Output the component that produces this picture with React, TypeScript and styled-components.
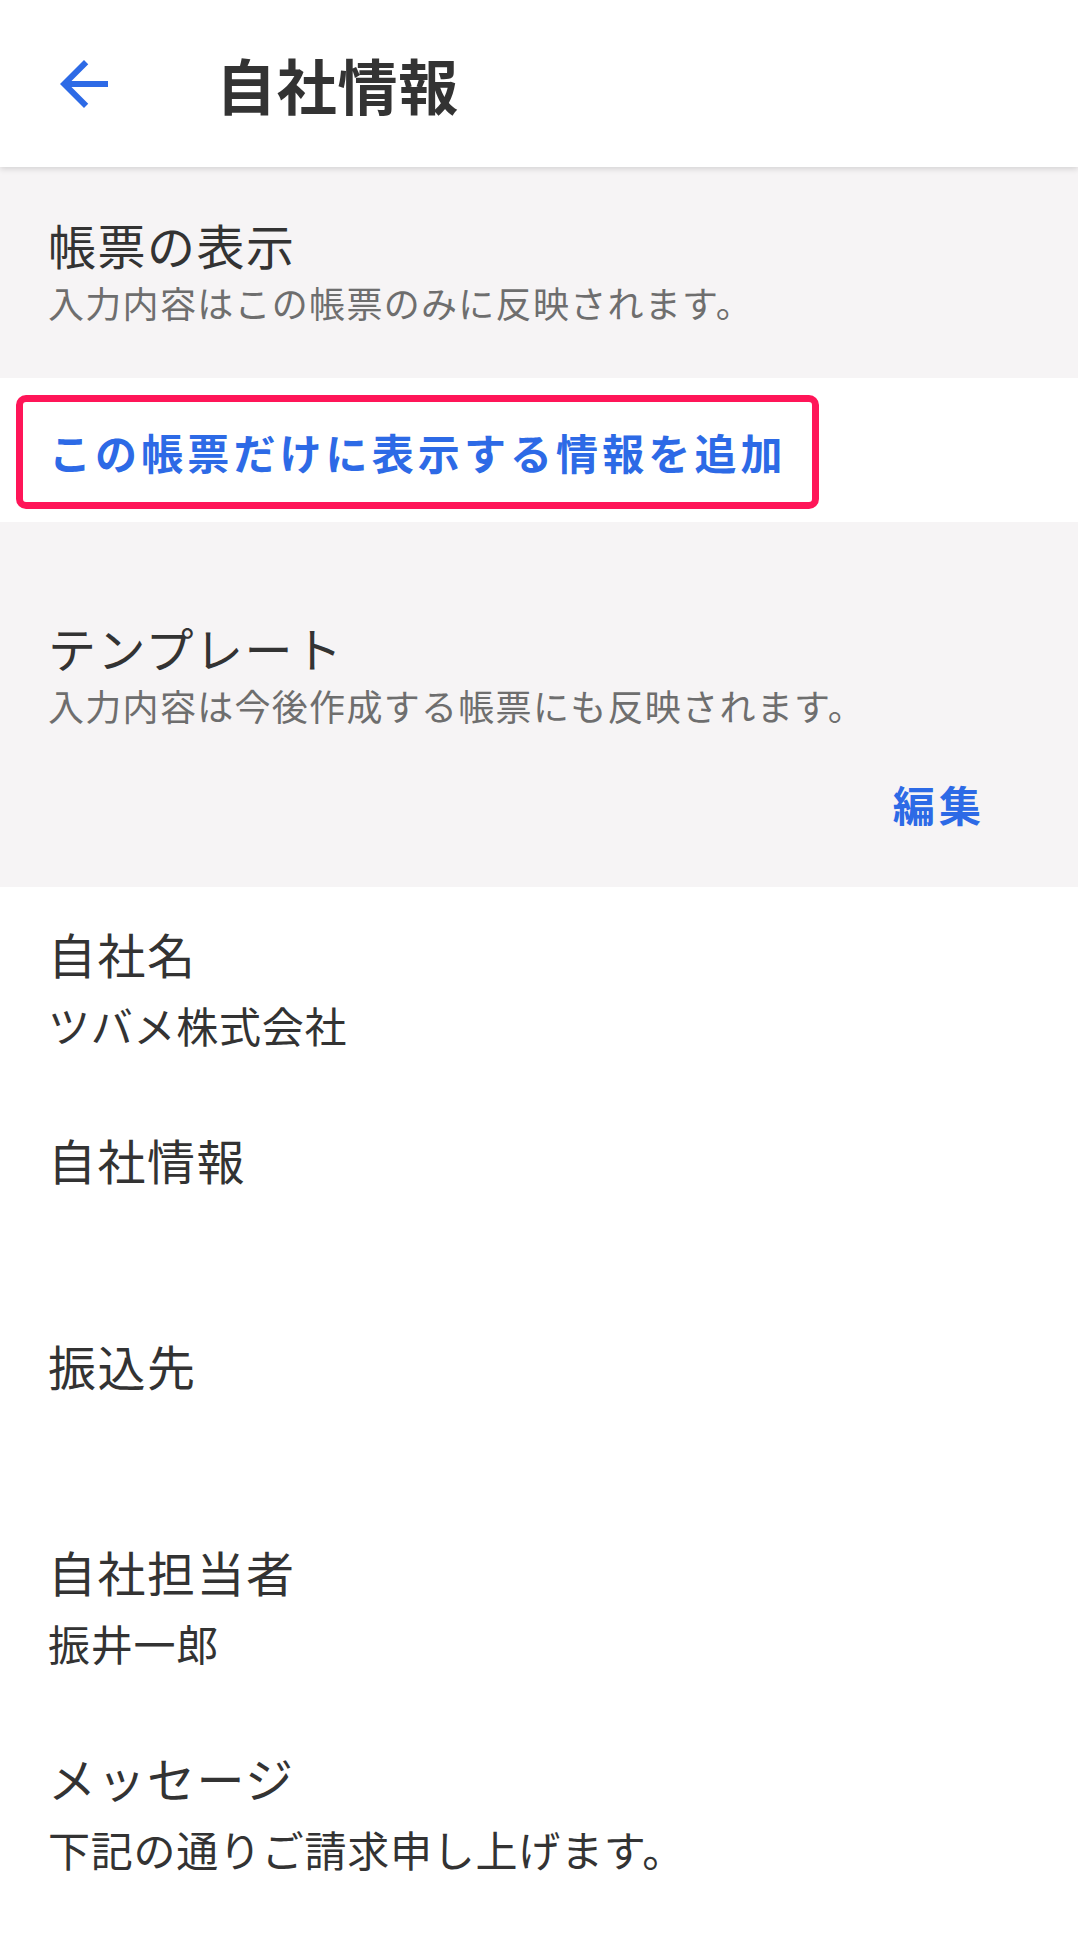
import React from "react";
import styled, { createGlobalStyle } from "styled-components";

const GlobalStyle = createGlobalStyle`
  html, body {
    margin: 0;
    padding: 0;
    background: #ffffff;
  }
  body {
    font-family: "Noto Sans CJK JP", "Noto Sans", Roboto, sans-serif;
    color: #333333;
    -webkit-font-smoothing: antialiased;
  }
  * {
    box-sizing: border-box;
  }
`;

const BLUE = "#2d6ae6";
const PINK = "#ff1558";
const PANEL = "#f6f4f5";

const Page = styled.div`
  width: 1078px;
  min-height: 1940px;
  background: #ffffff;
  display: flex;
  flex-direction: column;
`;

const AppBar = styled.header`
  position: relative;
  z-index: 1;
  height: 167px;
  display: flex;
  align-items: center;
  padding-left: 48px;
  background: #ffffff;
  box-shadow: 0 2px 6px rgba(0, 0, 0, 0.14);
`;

const BackButton = styled.button`
  width: 72px;
  height: 72px;
  padding: 0;
  border: none;
  background: transparent;
  display: flex;
  align-items: center;
  justify-content: center;
  color: ${BLUE};
  cursor: pointer;
`;

const Title = styled.h1`
  margin: 0 0 0 96px;
  font-size: 60px;
  line-height: 72px;
  font-weight: 700;
  letter-spacing: 0.75px;
  color: #333333;
`;

const Panel = styled.section<{ $top: number; $bottom: number }>`
  background: ${PANEL};
  display: flex;
  flex-direction: column;
  padding: ${(p) => p.$top}px 0 ${(p) => p.$bottom}px 48px;
`;

const PanelHeading = styled.div`
  font-size: 48px;
  line-height: 60px;
  letter-spacing: 1.5px;
  color: #333333;
`;

const PanelNote = styled.div`
  margin-top: 6px;
  font-size: 36px;
  line-height: 44px;
  letter-spacing: 1.3px;
  color: #6e6e6e;
`;

const EditRow = styled.div`
  display: flex;
  justify-content: flex-end;
  margin-top: 51px;
  padding-right: 93px;
`;

const TextButton = styled.button`
  padding: 0;
  border: none;
  background: transparent;
  font-family: inherit;
  font-size: 42px;
  line-height: 52px;
  font-weight: 700;
  letter-spacing: 4.1px;
  color: ${BLUE};
  cursor: pointer;
`;

const ButtonArea = styled.div`
  background: #ffffff;
  display: flex;
  padding: 17px 0 13px 16px;
`;

const Highlight = styled.div`
  height: 114px;
  display: inline-flex;
  align-items: center;
  padding: 0 25px 0 26px;
  border: 7px solid ${PINK};
  border-radius: 10px;
`;

const FieldList = styled.div`
  display: flex;
  flex-direction: column;
`;

const Field = styled.div`
  display: flex;
  flex-direction: column;
  gap: 16px;
  padding: 36px 48px 42px;
`;

const FieldLabel = styled.div`
  font-size: 48px;
  line-height: 60px;
  letter-spacing: 1.5px;
  color: #333333;
`;

const FieldValue = styled.div`
  min-height: 52px;
  font-size: 42px;
  line-height: 52px;
  letter-spacing: 0.75px;
  color: #333333;
`;

const ArrowBack = () => (
  <svg width="72" height="72" viewBox="0 0 24 24" fill="currentColor">
    <path d="M20 11H7.83l5.59-5.59L12 4l-8 8 8 8 1.41-1.41L7.83 13H20v-2z" />
  </svg>
);

const fields: { label: string; value: string }[] = [
  { label: "自社名", value: "ツバメ株式会社" },
  { label: "自社情報", value: "" },
  { label: "振込先", value: "" },
  { label: "自社担当者", value: "振井一郎" },
  { label: "メッセージ", value: "下記の通りご請求申し上げます。" },
];

export default function App() {
  return (
    <>
      <GlobalStyle />
      <Page>
        <AppBar>
          <BackButton aria-label="戻る">
            <ArrowBack />
          </BackButton>
          <Title>自社情報</Title>
        </AppBar>

        <Panel $top={47} $bottom={54}>
          <PanelHeading>帳票の表示</PanelHeading>
          <PanelNote>入力内容はこの帳票のみに反映されます。</PanelNote>
        </Panel>

        <ButtonArea>
          <Highlight>
            <TextButton>この帳票だけに表示する情報を追加</TextButton>
          </Highlight>
        </ButtonArea>

        <Panel $top={95} $bottom={57}>
          <PanelHeading>テンプレート</PanelHeading>
          <PanelNote>入力内容は今後作成する帳票にも反映されます。</PanelNote>
          <EditRow>
            <TextButton>編集</TextButton>
          </EditRow>
        </Panel>

        <FieldList>
          {fields.map((f) => (
            <Field key={f.label}>
              <FieldLabel>{f.label}</FieldLabel>
              <FieldValue>{f.value}</FieldValue>
            </Field>
          ))}
        </FieldList>
      </Page>
    </>
  );
}
